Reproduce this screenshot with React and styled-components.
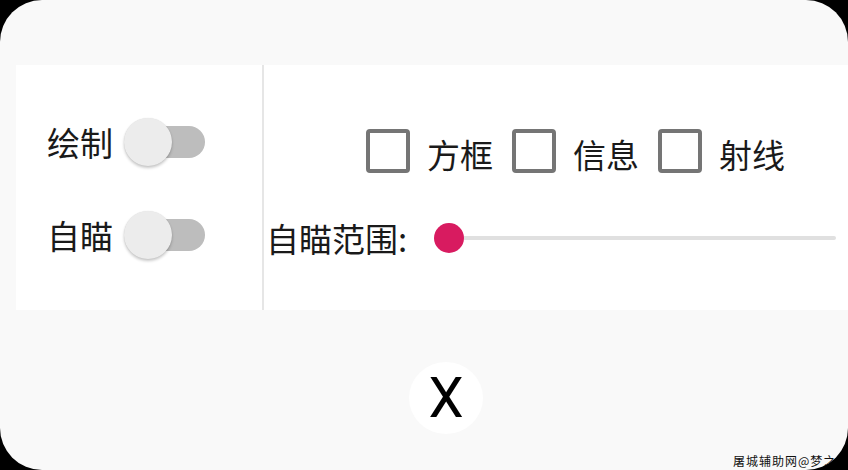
import React, { useState } from "react";
import styled, { createGlobalStyle } from "styled-components";

const Global = createGlobalStyle`
  html, body { margin: 0; padding: 0; background: #000; }
  body { font-family: "Noto Sans CJK SC", "Noto Sans", Roboto, sans-serif; }
`;

const Panel = styled.div`
  position: relative;
  width: 848px;
  height: 470px;
  background: #f9f9f9;
  border-radius: 42px;
  overflow: hidden;
  display: flex;
  flex-direction: column;
  padding-top: 65px;
  box-sizing: border-box;
`;

const Band = styled.div`
  margin-left: 16px;
  height: 245px;
  background: #fff;
  display: flex;
`;

const LeftCol = styled.div`
  width: 246px;
  display: flex;
  flex-direction: column;
  padding: 51px 0 0 31px;
  box-sizing: border-box;
  gap: 41px;
`;

const Divider = styled.div`
  width: 2px;
  background: #e6e6e6;
`;

const RightCol = styled.div`
  flex: 1;
  display: flex;
  flex-direction: column;
  padding-top: 64px;
  gap: 45px;
`;

const Label = styled.span`
  font-size: 33px;
  line-height: 1;
  color: #1a1a1a;
  white-space: nowrap;
`;

const ToggleRow = styled.div`
  display: flex;
  align-items: center;
  height: 52px;
`;

const SwitchBox = styled.div`
  position: relative;
  width: 83px;
  height: 52px;
  margin-left: 10px;
  flex: none;
`;

const Track = styled.div`
  position: absolute;
  left: 16px;
  right: 1px;
  top: 10px;
  height: 32px;
  border-radius: 16px;
  background: ${(p) => (p.$on ? "#f48fb1" : "#bdbdbd")};
`;

const Thumb = styled.div`
  position: absolute;
  top: 2px;
  left: ${(p) => (p.$on ? "34px" : "1px")};
  width: 48px;
  height: 48px;
  border-radius: 50%;
  background: ${(p) => (p.$on ? "#d81b60" : "#ececec")};
  box-shadow: 0 2px 3px rgba(0, 0, 0, 0.22), 0 0 1px rgba(0, 0, 0, 0.12);
`;

function Toggle({ label }) {
  const [on, setOn] = useState(false);
  return (
    <ToggleRow>
      <Label>{label}</Label>
      <SwitchBox onClick={() => setOn(!on)}>
        <Track $on={on} />
        <Thumb $on={on} />
      </SwitchBox>
    </ToggleRow>
  );
}

const CheckRow = styled.div`
  display: flex;
  align-items: center;
  padding-left: 102px;
  height: 44px;
`;

const CheckItem = styled.label`
  display: flex;
  align-items: center;
  margin-right: 19px;
  cursor: pointer;
`;

const Box = styled.span`
  width: 44px;
  height: 44px;
  box-sizing: border-box;
  border: 4px solid #757575;
  border-radius: 4px;
  margin-right: 17px;
  background: ${(p) => (p.$on ? "#757575" : "transparent")};
`;

const CheckLabel = styled(Label)`
  position: relative;
  top: 3px;
`;

function Check({ label }) {
  const [on, setOn] = useState(false);
  return (
    <CheckItem onClick={() => setOn(!on)}>
      <Box $on={on} />
      <CheckLabel>{label}</CheckLabel>
    </CheckItem>
  );
}

const SliderRow = styled.div`
  display: flex;
  align-items: center;
  height: 40px;
  padding-left: 2px;
  padding-right: 12px;
`;

const Rail = styled.div`
  position: relative;
  flex: 1;
  height: 4px;
  margin-left: 42px;
  background: #e0e0e0;
  border-radius: 2px;
`;

const Knob = styled.div`
  position: absolute;
  top: 50%;
  width: 30px;
  height: 30px;
  margin: -15px 0 0 -15px;
  border-radius: 50%;
  background: #d81b60;
`;

const Footer = styled.div`
  display: flex;
  justify-content: center;
  padding: 52px 0 0 44px;
`;

const CloseButton = styled.button`
  width: 74px;
  height: 72px;
  border: none;
  border-radius: 50%;
  background: #fff;
  padding: 0;
  font-family: Roboto, "Liberation Sans", sans-serif;
  font-size: 56px;
  line-height: 1;
  color: #000;
  display: flex;
  align-items: center;
  justify-content: center;
`;

const Mark = styled.div`
  position: absolute;
  left: 733px;
  top: 452px;
  font-size: 12px;
  letter-spacing: 1px;
  color: #111;
  white-space: nowrap;
`;

export default function App() {
  const value = 0;
  return (
    <>
      <Global />
      <Panel>
        <Band>
          <LeftCol>
            <Toggle label="绘制" />
            <Toggle label="自瞄" />
          </LeftCol>
          <Divider />
          <RightCol>
            <CheckRow>
              <Check label="方框" />
              <Check label="信息" />
              <Check label="射线" />
            </CheckRow>
            <SliderRow>
              <Label>自瞄范围:</Label>
              <Rail>
                <Knob style={{ left: `${value}%` }} />
              </Rail>
            </SliderRow>
          </RightCol>
        </Band>
        <Footer>
          <CloseButton>X</CloseButton>
        </Footer>
        <Mark>屠城辅助网@梦之</Mark>
      </Panel>
    </>
  );
}
